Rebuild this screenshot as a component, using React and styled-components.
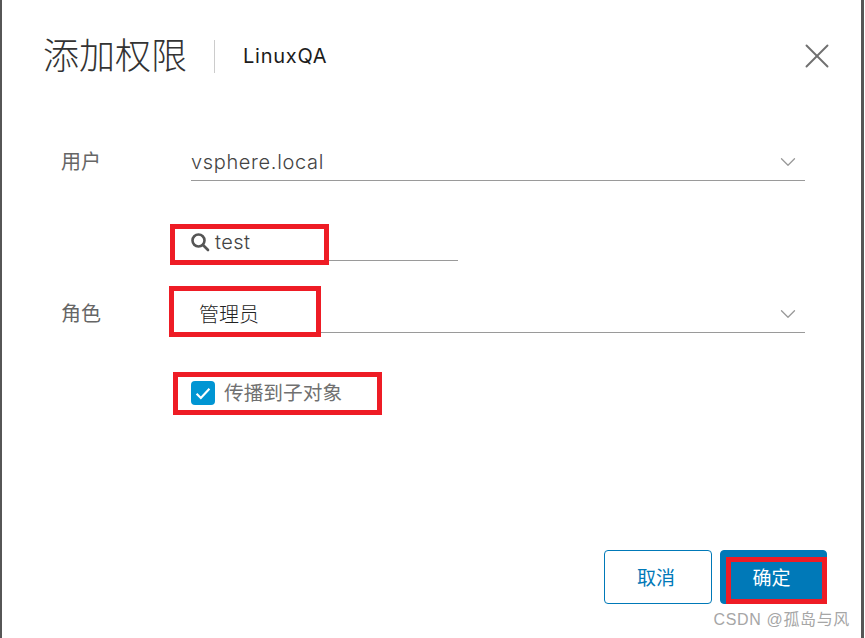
import React from 'react'
import styled, { createGlobalStyle } from 'styled-components'
import { ChevronDown, X } from 'lucide-react'

const cjk = 'Inter, "Noto Sans CJK SC", sans-serif'

const Global = createGlobalStyle`
  html, body { margin: 0; padding: 0; background: #fff; }
  body { font-family: ${cjk}; }
`

const Dialog = styled.div`
  position: relative;
  box-sizing: border-box;
  width: 864px;
  height: 638px;
  padding: 30px 23px 34px 41px;
  background: #fff;
  border-left: 2px solid #565656;
  border-right: 3px solid #565656;
  display: flex;
  flex-direction: column;
  overflow: hidden;
`

const Header = styled.div`
  display: flex;
  align-items: center;
  height: 52px;
`

const Title = styled.h1`
  margin: 0;
  font-size: 36px;
  font-weight: 300;
  line-height: 52px;
  color: #333;
`

const Divider = styled.span`
  width: 1px;
  height: 33px;
  margin: 0 28px 0 27px;
  background: #ccc;
`

const Subtitle = styled.span`
  font-size: 20px;
  font-weight: 400;
  letter-spacing: 0.75px;
  color: #1c1c1c;
`

const Close = styled.button`
  margin-left: auto;
  width: 42px;
  height: 42px;
  padding: 0;
  border: 0;
  background: none;
  color: #707070;
  display: flex;
  align-items: center;
  justify-content: center;
`

const Form = styled.div`
  display: flex;
  flex-direction: column;
  padding: 0 33px 0 18px;
  margin-top: 61px;
  flex: 1;
`

const Row = styled.div`
  display: flex;
  align-items: flex-end;
  margin-top: ${p => p.$top || 0}px;
`

const Label = styled.label`
  width: 130px;
  flex: none;
  height: 38px;
  line-height: 38px;
  font-size: 20px;
  color: #666;
`

const Field = styled.div`
  flex: ${p => (p.$width ? 'none' : 1)};
  width: ${p => p.$width || 'auto'};
  height: 38px;
  box-sizing: border-box;
  display: flex;
  align-items: center;
  gap: 5px;
  padding: ${p => p.$pad || '0 4px 0 0'};
  border-bottom: 1px solid #9a9a9a;
  font-size: 20px;
  font-weight: 300;
  letter-spacing: ${p => p.$spacing || 0};
  color: ${p => p.$color || '#444'};
`

const Chevron = styled(ChevronDown)`
  margin-left: auto;
  color: #999;
`

const Check = styled.div`
  display: flex;
  align-items: center;
  gap: 9px;
  margin: 48px 0 0 130px;
  font-size: 19.7px;
  color: #707070;
  line-height: 24px;
`

const Box = styled.span`
  width: 24px;
  height: 24px;
  border-radius: 4px;
  background: #0095d3;
  display: flex;
  align-items: center;
  justify-content: center;
`

const Footer = styled.div`
  display: flex;
  justify-content: flex-end;
  gap: 8px;
  margin-right: 11px;
`

const Button = styled.button`
  width: ${p => p.$w}px;
  height: 54px;
  padding: 0 4px 2px 0;
  border-radius: 4px;
  border: 1px solid #0079b8;
  background: ${p => (p.$primary ? '#0079b8' : '#fff')};
  color: ${p => (p.$primary ? '#fff' : '#0079b8')};
  font-family: ${cjk};
  font-size: 19px;
  font-weight: 400;
`

// red annotation boxes drawn over the screenshot
const Mark = styled.div`
  position: absolute;
  box-sizing: border-box;
  border: 5px solid #ee1c25;
  left: ${p => p.$x - 2}px;
  top: ${p => p.$y}px;
  width: ${p => p.$w}px;
  height: ${p => p.$h}px;
`

const Watermark = styled.div`
  position: absolute;
  right: 11px;
  top: 610px;
  font-family: "Liberation Sans", "Noto Sans CJK SC", sans-serif;
  font-size: 16px;
  letter-spacing: 0.65px;
  line-height: 20px;
  color: #a6a6a6;
`

const SearchIcon = styled.svg`
  margin-left: -1px;
`

const Search = () => (
  <SearchIcon width="20" height="20" viewBox="0 0 20 20" fill="none" stroke="#555" strokeWidth="2.6">
    <circle cx="8.5" cy="8.5" r="6" />
    <path d="M13 13l5 5" strokeLinecap="round" />
  </SearchIcon>
)

export default function App() {
  return (
    <Dialog>
      <Global />
      <Header>
        <Title>添加权限</Title>
        <Divider />
        <Subtitle>LinuxQA</Subtitle>
        <Close><X size={42} strokeWidth={1.1} /></Close>
      </Header>
      <Form>
        <Row>
          <Label>用户</Label>
          <Field $spacing="0.65px">vsphere.local<Chevron size={26} strokeWidth={1.2} /></Field>
        </Row>
        <Row $top={42}>
          <Label />
          <Field $width="267px" $spacing="0.4px"><Search />test</Field>
        </Row>
        <Row $top={34}>
          <Label>角色</Label>
          <Field $pad="0 4px 0 8px" $color="#222">管理员<Chevron size={26} strokeWidth={1.2} /></Field>
        </Row>
        <Check>
          <Box>
            <svg width="20" height="20" viewBox="0 0 14 14" fill="none" stroke="#fff" strokeWidth="1.5">
              <path d="M2.5 7.5l3 3 6-6.5" />
            </svg>
          </Box>
          传播到子对象
        </Check>
      </Form>
      <Footer>
        <Button $w={108}>取消</Button>
        <Button $w={107} $primary>确定</Button>
      </Footer>
      <Mark $x={170} $y={224} $w={159} $h={41} />
      <Mark $x={169} $y={286} $w={152} $h={51} />
      <Mark $x={173} $y={372} $w={209} $h={43} />
      <Mark $x={726} $y={557} $w={101} $h={47} />
      <Watermark>CSDN @孤岛与风</Watermark>
    </Dialog>
  )
}
